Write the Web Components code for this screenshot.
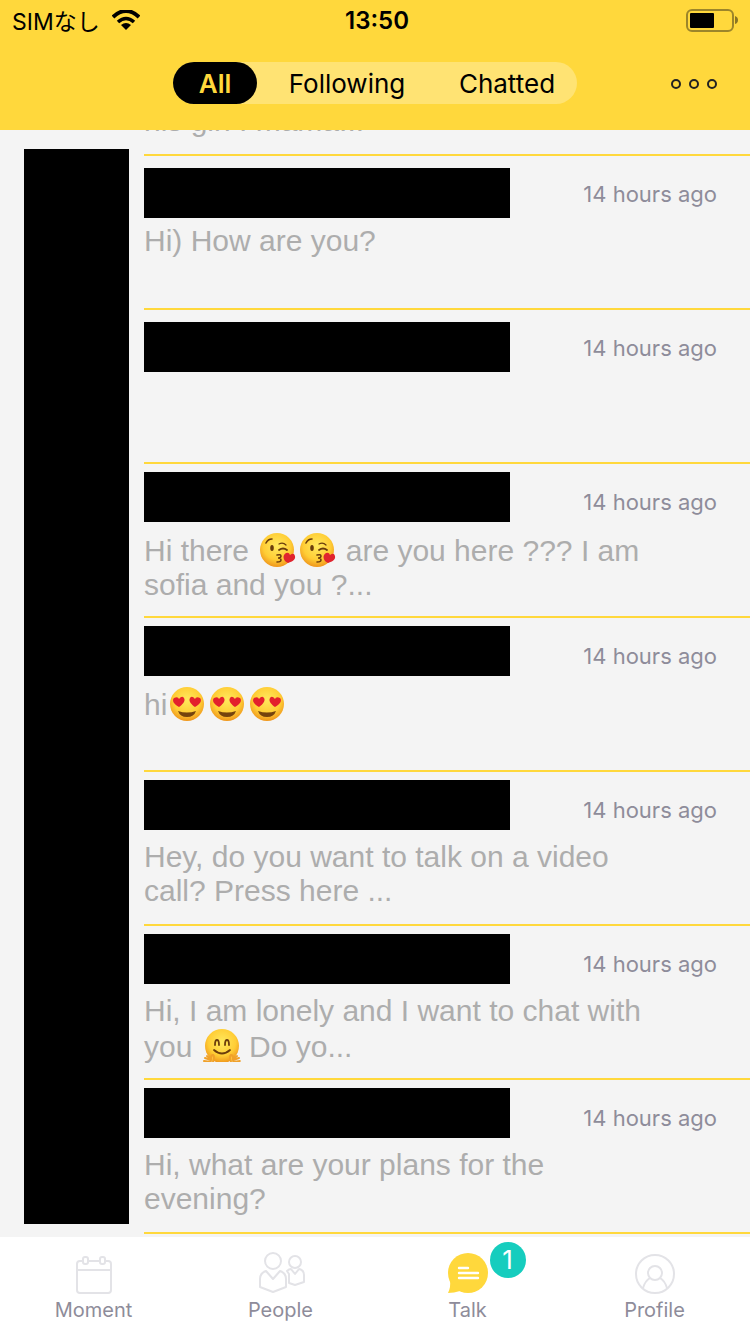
<!DOCTYPE html>
<html lang="en">
<head>
<meta charset="UTF-8">
<meta name="viewport" content="width=device-width, initial-scale=1">
<title>Talk</title>
<style>
  body {
    margin: 0;
    font-family: Inter, "Noto Sans CJK JP", sans-serif;
    background: #f4f4f4;
  }
</style>
</head>
<body>
<talk-app></talk-app>

<script>
const EMOJI = {
  kiss: `
    <circle cx="18" cy="18" r="17" fill="url(#face)"/>
    <path d="M7 11 Q9 7 13 7" fill="none" stroke="#6b3d0c" stroke-width="1.6" stroke-linecap="round"/>
    <path d="M20 12 Q24 10 27 13" fill="none" stroke="#6b3d0c" stroke-width="1.2" stroke-linecap="round"/>
    <ellipse cx="13" cy="16" rx="1.8" ry="3" fill="#6b3d0c"/>
    <path d="M20 18 Q24 15 28 18" fill="none" stroke="#6b3d0c" stroke-width="1.8" stroke-linecap="round"/>
    <path d="M18 23 Q22 22 22 24 Q22 26 19 26 Q22 26 22 28 Q22 30 18 30" fill="none" stroke="#6b3d0c" stroke-width="1.5" stroke-linecap="round"/>
    <path d="M29 31 C24 29 23 23 27 21 Q30 20 31 23 Q35 20 36 24 C37 28 32 30 29 31Z" fill="#e0242e"/>`,
  love: `
    <circle cx="18" cy="18" r="17" fill="url(#face)"/>
    <path d="M10 21 C4 18 3 14 5 12 Q9 10 10 13 Q13 9 15 12 C17 15 13 19 10 21Z" fill="#e3202c"/>
    <path d="M26 21 C32 18 33 14 31 12 Q27 10 26 13 Q23 9 21 12 C19 15 23 19 26 21Z" fill="#e3202c"/>
    <path d="M9 25 Q18 28 27 25 Q25 31 18 31 Q11 31 9 25Z" fill="#75430d"/>`,
  hug: `
    <circle cx="19" cy="18" r="17" fill="url(#face)"/>
    <path d="M12 17 Q12 12 14 12 Q16 12 16 17 M22 17 Q22 12 24 12 Q26 12 26 17" fill="none" stroke="#6b3d0c" stroke-width="1.8" stroke-linecap="round"/>
    <path d="M11 22 Q19 29 27 22" fill="none" stroke="#6b3d0c" stroke-width="1.8" stroke-linecap="round"/>
    <path d="M10 34 Q12 28 10 27 Q8 27 8 31 L4 28 M8 32 L2 30 M8 34 L1 33 M28 34 Q26 28 28 27 Q30 27 30 31 L34 28 M30 32 L36 30 M30 34 L37 33" fill="#ffc83a" stroke="#f0a12a" stroke-width="2" stroke-linecap="round"/>`
};

const TAB_ICONS = {
  moment: `
    <g fill="none" stroke="#e3e3e7" stroke-width="2">
      <path d="M8 7 H6 Q3 7 3 10 V36 Q3 39 6 39 H34 Q37 39 37 36 V10 Q37 7 34 7 H31 M14 7 H26 M3 16 H37"/>
      <rect x="9" y="3" width="5" height="7" rx="2"/>
      <rect x="26" y="3" width="5" height="7" rx="2"/>
    </g>`,
  people: `
    <g fill="none" stroke="#e3e3e7" stroke-width="2" stroke-linejoin="round">
      <circle cx="12" cy="7" r="8"/>
      <path d="M5 17 L12 25 L19 17 Q25 19 25 25 V33 L12 38 L-1 33 V25 Q-1 19 5 17Z"/>
      <circle cx="34" cy="8" r="6"/>
      <path d="M26 17 Q28 15 30 15 L34 20 L38 15 Q43 16 43 21 V28 L34 31 L28 29 V20 Z"/>
    </g>`,
  talk: `
    <circle cx="20" cy="19" r="20" fill="#ffd83c"/>
    <path d="M2 26 Q3 33 0 39 Q6 39 12 37Z" fill="#ffd83c"/>
    <path d="M11 14 H20 M11 19 H30 M11 24 H30" stroke="#fff" stroke-width="2.4" stroke-linecap="round"/>`,
  profile: `
    <g fill="none" stroke="#e3e3e7" stroke-width="2">
      <circle cx="20" cy="20" r="19"/>
      <circle cx="20" cy="19" r="7"/>
      <path d="M8 34 Q10 27 15 24 M25 24 Q30 27 32 34"/>
    </g>`
};

class EmojiIcon extends HTMLElement {
  constructor() {
    super();
    this.attachShadow({mode: 'open'});
  }
  connectedCallback() {
    this.shadowRoot.innerHTML = `
      <style>
        :host {
          display: inline-block;
          box-sizing: border-box;
          width: 40px;
          height: 36px;
          padding-left: 2px;
          vertical-align: -7px;
        }
        :host([name="hug"]) { clip-path: inset(0 0 2px); }
        svg { display: block; }
      </style>
      <svg width="38" height="36" viewBox="0 0 38 36" aria-hidden="true">
        <defs>
          <radialGradient id="face" cx="50%" cy="38%" r="62%">
            <stop offset="0" stop-color="#ffe95e"/>
            <stop offset=".65" stop-color="#ffcd35"/>
            <stop offset="1" stop-color="#ef961c"/>
          </radialGradient>
        </defs>
        ${EMOJI[this.getAttribute('name')]}
      </svg>`;
  }
}
customElements.define('emoji-icon', EmojiIcon);

class StatusBar extends HTMLElement {
  constructor() {
    super();
    this.attachShadow({mode: 'open'});
    this.shadowRoot.innerHTML = `
      <style>
        :host {
          display: grid;
          grid-template-columns: 1fr auto 1fr;
          align-items: center;
          height: 40px;
          padding: 0 12px;
          font-size: 23px;
        }
        .carrier { display: flex; align-items: center; gap: 12px; }
        .time { font-weight: 600; font-size: 24px; padding-left: 4px; }
        .battery { justify-self: end; }
        svg { display: block; }
      </style>
      <div class="carrier">
        <span>SIMなし</span>
        <svg width="28" height="20" viewBox="0 0 28 20" aria-hidden="true">
          <path d="M1 7 Q14 -5 27 7" fill="none" stroke="#000" stroke-width="4"/>
          <path d="M6 12 Q14 5 22 12" fill="none" stroke="#000" stroke-width="3.6"/>
          <path d="M9 15 Q14 11 19 15 L14 20Z"/>
        </svg>
      </div>
      <span class="time">13:50</span>
      <svg class="battery" width="54" height="24" viewBox="0 0 54 24" aria-hidden="true">
        <rect x="3" y="2" width="46" height="21" rx="5" fill="none" stroke="#9c852a" stroke-width="2"/>
        <rect x="6" y="5" width="24" height="15" rx="1"/>
        <path d="M51 8 Q54 9 54 12 Q54 15 51 16Z" fill="#8a7524"/>
      </svg>`;
  }
}
customElements.define('status-bar', StatusBar);

class FilterTabs extends HTMLElement {
  constructor() {
    super();
    this.attachShadow({mode: 'open'});
    this.shadowRoot.innerHTML = `
      <style>
        :host {
          display: grid;
          grid-template-columns: 1fr auto 1fr;
          align-items: center;
          padding: 22px 32px 26px;
        }
        .pill {
          grid-column: 2;
          display: flex;
          height: 42px;
          border-radius: 21px;
          background: #ffe373;
        }
        button {
          border: 0;
          margin: 0;
          background: none;
          font: inherit;
          font-size: 26px;
          color: #000;
        }
        .filter { height: 42px; padding: 0; border-radius: 21px; flex: 0 0 auto; }
        .all { width: 84px; background: #000; color: #ffd83c; font-weight: 600; }
        .following { width: 180px; }
        .chatted { width: 140px; }
        .more { justify-self: end; padding: 0; }
        svg { display: block; }
      </style>
      <nav class="pill" aria-label="Filter">
        <button class="filter all">All</button>
        <button class="filter following">Following</button>
        <button class="filter chatted">Chatted</button>
      </nav>
      <button class="more" aria-label="More">
        <svg width="48" height="12" viewBox="0 0 48 12" aria-hidden="true">
          <g fill="none" stroke="#222" stroke-width="2">
            <circle cx="6" cy="7" r="4"/>
            <circle cx="24" cy="7" r="4"/>
            <circle cx="42" cy="7" r="4"/>
          </g>
        </svg>
      </button>`;
  }
}
customElements.define('filter-tabs', FilterTabs);

class TalkRow extends HTMLElement {
  constructor() {
    super();
    this.attachShadow({mode: 'open'});
  }
  connectedCallback() {
    this.shadowRoot.innerHTML = `
      <style>
        :host {
          display: block;
          box-sizing: border-box;
          height: 154px;
          border-bottom: 2px solid #ffd83c;
        }
        .top {
          display: flex;
          justify-content: space-between;
          box-sizing: border-box;
          height: 68px;
          padding-right: 33px;
        }
        .name { width: 366px; height: 50px; margin-top: 8px; background: #000; }
        :host([spaced]) .name { margin-top: 12px; }
        time {
          padding-top: 26px;
          font-size: 22px;
          line-height: 24px;
          color: #8e8c9a;
        }
        p {
          margin: 0;
          max-width: 510px;
          font-family: "Liberation Sans", Arial, sans-serif;
          font-size: 30px;
          line-height: 34px;
          color: #adadad;
        }
      </style>
      <div class="top">
        <div class="name"></div>
        <time>${this.getAttribute('time')}</time>
      </div>
      <p><slot></slot></p>`;
  }
}
customElements.define('talk-row', TalkRow);

class TalkList extends HTMLElement {
  constructor() {
    super();
    this.attachShadow({mode: 'open'});
    this.shadowRoot.innerHTML = `
      <style>
        :host {
          display: flex;
          gap: 15px;
          padding-left: 24px;
          overflow: hidden;
        }
        .avatars {
          flex: 0 0 105px;
          margin: 19px 0 13px;
          background: #000;
        }
        .rows { flex: 1; min-width: 0; }
        /* last line of the row that is scrolled under the header */
        .scrolled {
          display: flex;
          align-items: flex-end;
          height: 24px;
          overflow: hidden;
          border-bottom: 2px solid #ffd83c;
        }
        .scrolled p {
          margin: 0 0 16px;
          font-family: "Liberation Sans", Arial, sans-serif;
          font-size: 30px;
          line-height: 34px;
          color: #adadad;
        }
      </style>
      <div class="avatars"></div>
      <div class="rows">
        <div class="scrolled"><p>his girl I mama...</p></div>
        <slot></slot>
      </div>`;
  }
}
customElements.define('talk-list', TalkList);

class TabItem extends HTMLElement {
  constructor() {
    super();
    this.attachShadow({mode: 'open'});
  }
  connectedCallback() {
    const badge = this.getAttribute('badge');
    this.shadowRoot.innerHTML = `
      <style>
        :host { display: block; flex: 1; }
        a {
          display: flex;
          flex-direction: column;
          align-items: center;
          gap: 4px;
          padding-top: 17px;
          color: #8e8c9a;
          font-size: 20px;
          line-height: 24px;
          text-decoration: none;
        }
        .icon { position: relative; width: 40px; height: 40px; }
        svg { display: block; overflow: visible; }
        .badge {
          position: absolute;
          left: 42px;
          top: -12px;
          width: 36px;
          height: 36px;
          border-radius: 50%;
          background: #16cdbe;
          color: #fff;
          font-size: 26px;
          line-height: 36px;
          text-align: center;
        }
      </style>
      <a href="#${this.getAttribute('icon')}">
        <span class="icon">
          <svg width="40" height="40" viewBox="0 0 40 40" aria-hidden="true">${TAB_ICONS[this.getAttribute('icon')]}</svg>
          ${badge ? `<span class="badge">${badge}</span>` : ''}
        </span>
        <slot></slot>
      </a>`;
  }
}
customElements.define('tab-item', TabItem);

class TalkApp extends HTMLElement {
  constructor() {
    super();
    this.attachShadow({mode: 'open'});
    this.shadowRoot.innerHTML = `
      <style>
        :host { display: flex; flex-direction: column; height: 100vh; }
        header { flex: none; background: #ffd83c; }
        talk-list { flex: 1; min-height: 0; }
        footer { flex: none; display: flex; height: 97px; padding-right: 2px; background: #fff; }
      </style>
      <header>
        <status-bar></status-bar>
        <filter-tabs></filter-tabs>
      </header>
      <talk-list>
        <talk-row spaced time="14 hours ago">Hi) How are you?</talk-row>
        <talk-row spaced time="14 hours ago"></talk-row>
        <talk-row time="14 hours ago">Hi there <emoji-icon name="kiss"></emoji-icon><emoji-icon name="kiss"></emoji-icon> are you here ??? I am sofia and you ?...</talk-row>
        <talk-row time="14 hours ago">hi<emoji-icon name="love"></emoji-icon><emoji-icon name="love"></emoji-icon><emoji-icon name="love"></emoji-icon></talk-row>
        <talk-row time="14 hours ago">Hey, do you want to talk on a video call? Press here ...</talk-row>
        <talk-row time="14 hours ago">Hi, I am lonely and I want to chat with you <emoji-icon name="hug"></emoji-icon> Do yo...</talk-row>
        <talk-row time="14 hours ago">Hi, what are your plans for the evening?</talk-row>
      </talk-list>
      <footer>
        <tab-item icon="moment">Moment</tab-item>
        <tab-item icon="people">People</tab-item>
        <tab-item icon="talk" badge="1">Talk</tab-item>
        <tab-item icon="profile">Profile</tab-item>
      </footer>`;
  }
}
customElements.define('talk-app', TalkApp);
</script>
</body>
</html>
